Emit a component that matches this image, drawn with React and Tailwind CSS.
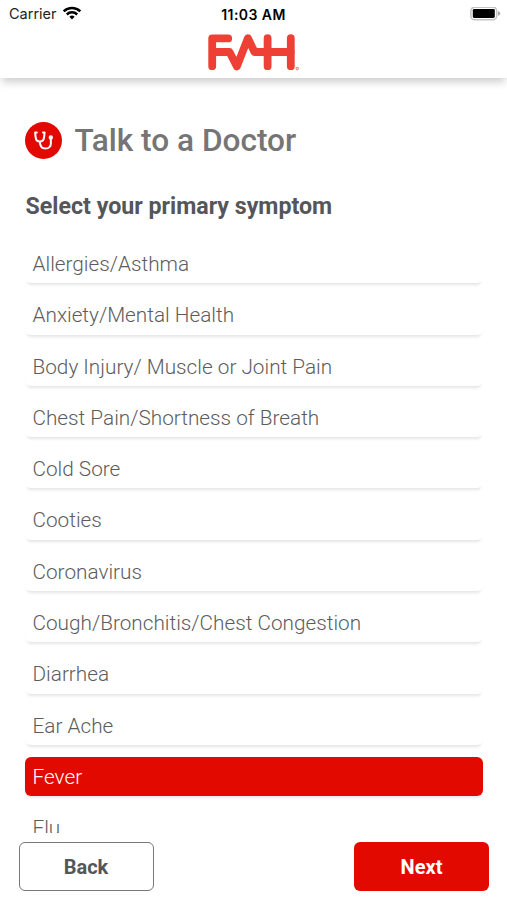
const SYMPTOMS = [
    "Allergies/Asthma",
    "Anxiety/Mental Health",
    "Body Injury/ Muscle or Joint Pain",
    "Chest Pain/Shortness of Breath",
    "Cold Sore",
    "Cooties",
    "Coronavirus",
    "Cough/Bronchitis/Chest Congestion",
    "Diarrhea",
    "Ear Ache",
    "Fever",
    "Flu",
];

const WifiIcon = () => (
    <svg width="20" height="16" viewBox="0 0 20 16" fill="none" stroke="#000" strokeWidth="2.5">
        <path d="M1.7 5.3a11.8 11.8 0 0 1 16.6 0" />
        <path d="M4.8 8.5a7.4 7.4 0 0 1 10.4 0" />
        <path d="M10 13.5l-2.6-2.7a3.7 3.7 0 0 1 5.2 0z" fill="#000" stroke="none" />
    </svg>
);

const BatteryIcon = () => (
    <svg width="31" height="15" viewBox="0 0 31 15" fill="none">
        <rect x="0.9" y="0.1" width="25.8" height="12.6" rx="3.8" stroke="#c4c4c4" strokeWidth="1.6" />
        <rect x="2.8" y="1.9" width="22" height="9" rx="1.4" fill="#000" />
        <path d="M28 4.1q2.2 0.6 2.2 2.3t-2.2 2.3z" fill="#a6a6a6" />
    </svg>
);

const Logo = () => (
    <svg width="92" height="38" viewBox="0 0 92 38" fill="none" stroke="#ee4035" strokeWidth="7.8" strokeLinecap="round" strokeLinejoin="round">
        <path d="M20.2 5.4H4.2V33.2M4.2 19H21.5L28.9 33.4L39.9 5.2L46.5 19H82.6" />
        <path d="M59.6 5.2V33.2M82.8 5.2V33.2" />
        <circle cx="89.2" cy="35.6" r="1.2" stroke="#f28a83" strokeWidth="1.2" />
    </svg>
);

const StethoscopeIcon = () => (
    <svg width="37" height="37" viewBox="0 0 37 37" fill="none" stroke="#fff" strokeWidth="2" strokeLinecap="round" strokeLinejoin="round">
        <path d="M11.8 10.5H10.1L10.6 15.2C10.9 18 12.6 19.6 14.8 19.6S18.8 18 19.1 15.2L19.6 10.5H18" />
        <path d="M14.8 19.8C15 24 17 26.6 20.4 26.6S26 24.4 25.9 21.2L25.8 17" />
        <circle cx="25.8" cy="15.4" r="1.2" />
    </svg>
);

const App = () => (
    <div className="flex h-[900px] w-[507px] flex-col overflow-hidden bg-white font-['Roboto',sans-serif]">
        <header className="relative z-10 h-[78px] shrink-0 bg-white shadow-[0_6px_8px_-2px_rgba(0,0,0,0.2)]">
            <div className="grid h-[28px] grid-cols-3 items-center pl-[9px] pr-[6px] font-['Inter',sans-serif] text-[14.5px] text-black">
                <div className="flex items-center gap-[5px]">
                    <span className="text-[#222]">Carrier</span>
                    <WifiIcon />
                </div>
                <span className="-ml-[3px] whitespace-nowrap text-center text-[14px] font-semibold tracking-[0.45px]">11:03 AM</span>
                <div className="flex justify-end">
                    <BatteryIcon />
                </div>
            </div>
            <div className="flex pl-[208px] pt-[5px]">
                <Logo />
            </div>
        </header>

        <main className="flex h-[755px] shrink-0 flex-col overflow-hidden px-[25px] pt-[44px]">
            <div className="flex h-[37px] shrink-0 items-center gap-[12.5px]">
                <div className="h-[37px] w-[37px] rounded-full bg-[#e10900]">
                    <StethoscopeIcon />
                </div>
                <h1 className="text-[31.6px] font-medium leading-[37px] text-[#757575]">Talk to a Doctor</h1>
            </div>
            <h2 className="mt-[32px] shrink-0 pl-[0.5px] text-[23.2px] font-bold leading-[30px] text-[#54565a]">Select your primary symptom</h2>
            <ul className="mt-[23px] flex w-[457.5px] flex-col gap-[12px]">
                {SYMPTOMS.map((symptom) => (
                    <li
                        key={symptom}
                        className={
                            symptom === "Fever"
                                ? "h-[39.3px] shrink-0 rounded-[6px] bg-[#e10900] px-[7.5px] text-[20.75px] font-light leading-[40.5px] text-white shadow-[0_2px_2px_rgba(0,0,0,0.08)]"
                                : "h-[39.3px] shrink-0 rounded-[6px] bg-white px-[7.5px] text-[20.75px] font-light leading-[40.5px] text-[#5c5c5c] shadow-[0_4px_3px_-2px_rgba(0,0,0,0.1)]"
                        }
                    >
                        {symptom}
                    </li>
                ))}
            </ul>
        </main>

        <footer className="flex shrink-0 justify-between pl-[19px] pr-[18px] pt-[9px]">
            <button type="button" className="h-[49px] w-[135px] rounded-[6px] border border-[#77787b] bg-white pr-[1px] text-[20px] font-bold text-[#54565a]">
                Back
            </button>
            <button type="button" className="h-[49px] w-[135px] rounded-[6px] bg-[#e10900] text-[20px] font-bold text-white">
                Next
            </button>
        </footer>
    </div>
);

export default App;
